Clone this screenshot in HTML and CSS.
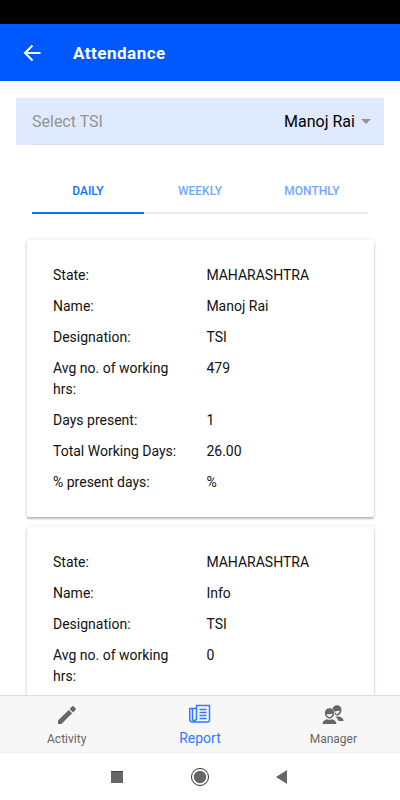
FILE: index.html
```html
<!DOCTYPE html>
<html lang="en">
<head>
<meta charset="utf-8">
<meta name="viewport" content="width=device-width, initial-scale=1">
<title>Attendance</title>
<link rel="stylesheet" href="styles.css">
</head>
<body>
<div class="status-bar"></div>
<header class="app-bar">
  <button class="back" type="button" aria-label="Back">
    <svg viewBox="0 0 18 18" width="18" height="18"><path d="M17.500 9H2.500M9.500 1.500L2 9l7.500 7.500" fill="none" stroke="currentColor" stroke-width="2"/></svg>
  </button>
  <h1 class="title">Attendance</h1>
</header>
<main class="content">
  <div class="field">
    <div class="field-inner">
      <label class="field-label" for="tsi">Select TSI</label>
      <select class="field-select" id="tsi"><option>Manoj Rai</option></select>
      <svg class="caret" viewBox="0 0 10 5" width="10" height="5"><path d="M0 0h10L5 5z" fill="currentColor"/></svg>
    </div>
  </div>
  <nav class="segments">
    <button class="segment active" type="button">DAILY</button>
    <button class="segment" type="button">WEEKLY</button>
    <button class="segment" type="button">MONTHLY</button>
  </nav>
  <section class="cards">
    <article class="card">
      <table class="details">
        <tr><th scope="row">State:</th><td>MAHARASHTRA</td></tr>
        <tr><th scope="row">Name:</th><td>Manoj Rai</td></tr>
        <tr><th scope="row">Designation:</th><td>TSI</td></tr>
        <tr><th scope="row">Avg no. of working hrs:</th><td>479</td></tr>
        <tr><th scope="row">Days present:</th><td>1</td></tr>
        <tr><th scope="row">Total Working Days:</th><td>26.00</td></tr>
        <tr><th scope="row">% present days:</th><td>%</td></tr>
      </table>
    </article>
    <article class="card">
      <table class="details">
        <tr><th scope="row">State:</th><td>MAHARASHTRA</td></tr>
        <tr><th scope="row">Name:</th><td>Info</td></tr>
        <tr><th scope="row">Designation:</th><td>TSI</td></tr>
        <tr><th scope="row">Avg no. of working hrs:</th><td>0</td></tr>
      </table>
    </article>
  </section>
</main>
<nav class="tab-bar">
  <a class="tab" href="#activity">
    <svg viewBox="0 0 22 22" width="22" height="22"><path d="M2 16.600V20h3.400L16.100 9.300 12.700 5.900zM19.700 5.700c.4-.4.4-.9 0-1.200l-2.200-2.200c-.3-.4-.8-.4-1.200 0L13.600 5 17 8.400z" fill="currentColor"/></svg>
    <span>Activity</span>
  </a>
  <a class="tab active" href="#report">
    <svg viewBox="0 0 22 22" width="22" height="22" fill="none" stroke="currentColor"><path d="M7.500 2.500h13v14.200c0 1.500-.7 2.300-2 2.300H3.700C2 19 .8 17.800.8 16.200V5.500h2.700v10.300c0 1.200.6 1.800 1.500 1.800s2.500-.5 2.500-2zM7.500 2.500v13M4 5.500h3.500" stroke-width="1.500"/><path d="M10.500 6.500h7M10.500 9.500h7M10.500 12.500h7M10.500 15.500h7" stroke-width="1.300"/></svg>
    <span>Report</span>
  </a>
  <a class="tab" href="#manager">
    <svg viewBox="0 0 22 22" width="22" height="22" fill="currentColor"><path d="M10.500 5.200C10.800 3 12.600 1.300 15 1.300c2.700 0 4.400 2 4.400 4.800 0 3.100-1.800 5.300-4.400 5.300-.9 0-1.700-.3-2.300-.8.500-2.100-.3-4.300-2.200-5.400z"/><path d="M13.200 7.300c1.700.1 3.300-.2 4.500-.7-.1 1.800-1.200 3.300-2.700 3.300-.7 0-1.200-.2-1.600-.6 0-.7 0-1.400-.2-2z" fill="#f7f7f7"/><path d="M13.200 12.800c4-.8 8 .4 8.400 4.200h-5c-.7-1.900-1.800-3.200-3.400-4.200z"/><path d="M7.500 4.300c2.700 0 4.600 2 4.600 4.700 0 3.200-2 5.500-4.600 5.500S2.900 12.200 2.900 9c0-2.700 1.900-4.700 4.600-4.700z"/><path d="M4.500 10c2.200.4 4.500.2 6-.4-.2 2-1.400 3.400-3 3.400s-2.800-1.300-3-3z" fill="#f7f7f7"/><path d="M.5 20c.2-2.900 2.200-4.500 4.700-4.800 1.400.7 3.200.7 4.600 0 2.500.3 4.500 1.900 4.700 4.800z"/></svg>
    <span>Manager</span>
  </a>
</nav>
<footer class="system-nav">
  <button type="button" aria-label="Recent apps"><svg viewBox="0 0 20 20" width="20" height="20"><path d="M4 4h12v12H4z" fill="#666"/><path d="M4 4.500h12" stroke="#444"/></svg></button>
  <button type="button" aria-label="Home"><svg viewBox="0 0 20 20" width="20" height="20"><circle cx="10" cy="10" r="8.500" fill="#fff" stroke="#333"/><circle cx="10" cy="10" r="6.200" fill="#666"/></svg></button>
  <button type="button" aria-label="Back"><svg viewBox="0 0 20 20" width="20" height="20"><path d="M3 10l11-7v14z" fill="#666"/></svg></button>
</footer>
</body>
</html>
```
FILE: styles.css
```css
* {
  box-sizing: border-box;
}

body {
  margin: 0;
  height: 100vh;
  display: flex;
  flex-direction: column;
  font-family: Roboto, sans-serif;
  font-size: 14px;
  color: #111;
  background: #fff;
}

button {
  border: 0;
  padding: 0;
  background: none;
  font: inherit;
  color: inherit;
}

svg {
  display: block;
}

.status-bar {
  flex: none;
  height: 24px;
  background: #000;
}

.app-bar {
  flex: none;
  height: 57px;
  display: flex;
  align-items: center;
  gap: 32px;
  padding: 0 23px;
  color: #fff;
  background: #0059ff;
}

.title {
  margin: 0;
  font-size: 17px;
  font-weight: 700;
  letter-spacing: 0.5px;
}

.content {
  flex: 1;
  min-height: 0;
  overflow: hidden;
  padding: 17px 16px 0;
}

.field {
  padding-left: 16px;
  background: #dfeaff;
}

.field-inner {
  display: flex;
  align-items: center;
  height: 47px;
  padding-right: 13px;
  border-bottom: 1px solid #d9dbe0;
  font-size: 16px;
}

.field-label {
  flex: 1;
  color: #949494;
}

.field-select {
  appearance: none;
  border: 0;
  padding: 0;
  background: none;
  font: inherit;
  color: #000;
}

.caret {
  margin-left: 6px;
  color: #949494;
}

.segments {
  display: flex;
  margin: 24px 16px 0;
}

.segment {
  flex: 1;
  height: 45px;
  border-bottom: 2px solid #ebebeb;
  font-size: 12px;
  font-weight: 500;
  color: #70a8ff;
}

.segment.active {
  color: #0a75ff;
  border-color: #0a75ff;
}

.cards {
  display: flex;
  flex-direction: column;
  gap: 10px;
  padding: 26px 10px 26px 11px;
}

.card {
  padding: 20px 26px 19px;
  border-radius: 2px;
  background: #fff;
  box-shadow: 0 2px 2px rgba(0, 0, 0, 0.24), 0 0 4px rgba(0, 0, 0, 0.1);
}

.details {
  width: 100%;
  table-layout: fixed;
  border-collapse: collapse;
  line-height: 21px;
}

.details th,
.details td {
  padding: 5px 0;
  text-align: left;
  vertical-align: top;
  font-weight: 400;
}

.details th {
  width: 52%;
  padding-right: 24px;
}

.tab-bar {
  flex: none;
  height: 58px;
  display: flex;
  border-top: 1px solid #dedede;
  border-bottom: 1px solid #f0f0f0;
  background: #f7f7f7;
}

.tab {
  flex: 1;
  display: flex;
  flex-direction: column;
  align-items: center;
  gap: 5px;
  padding-top: 8px;
  font-size: 12px;
  line-height: 16px;
  color: #666;
  text-decoration: none;
}

.tab.active {
  padding-top: 7px;
  font-size: 14px;
  color: #2b7cff;
}

.system-nav {
  flex: none;
  height: 47px;
  display: flex;
  align-items: center;
  justify-content: center;
  gap: 63px;
  background: #fff;
}
```
